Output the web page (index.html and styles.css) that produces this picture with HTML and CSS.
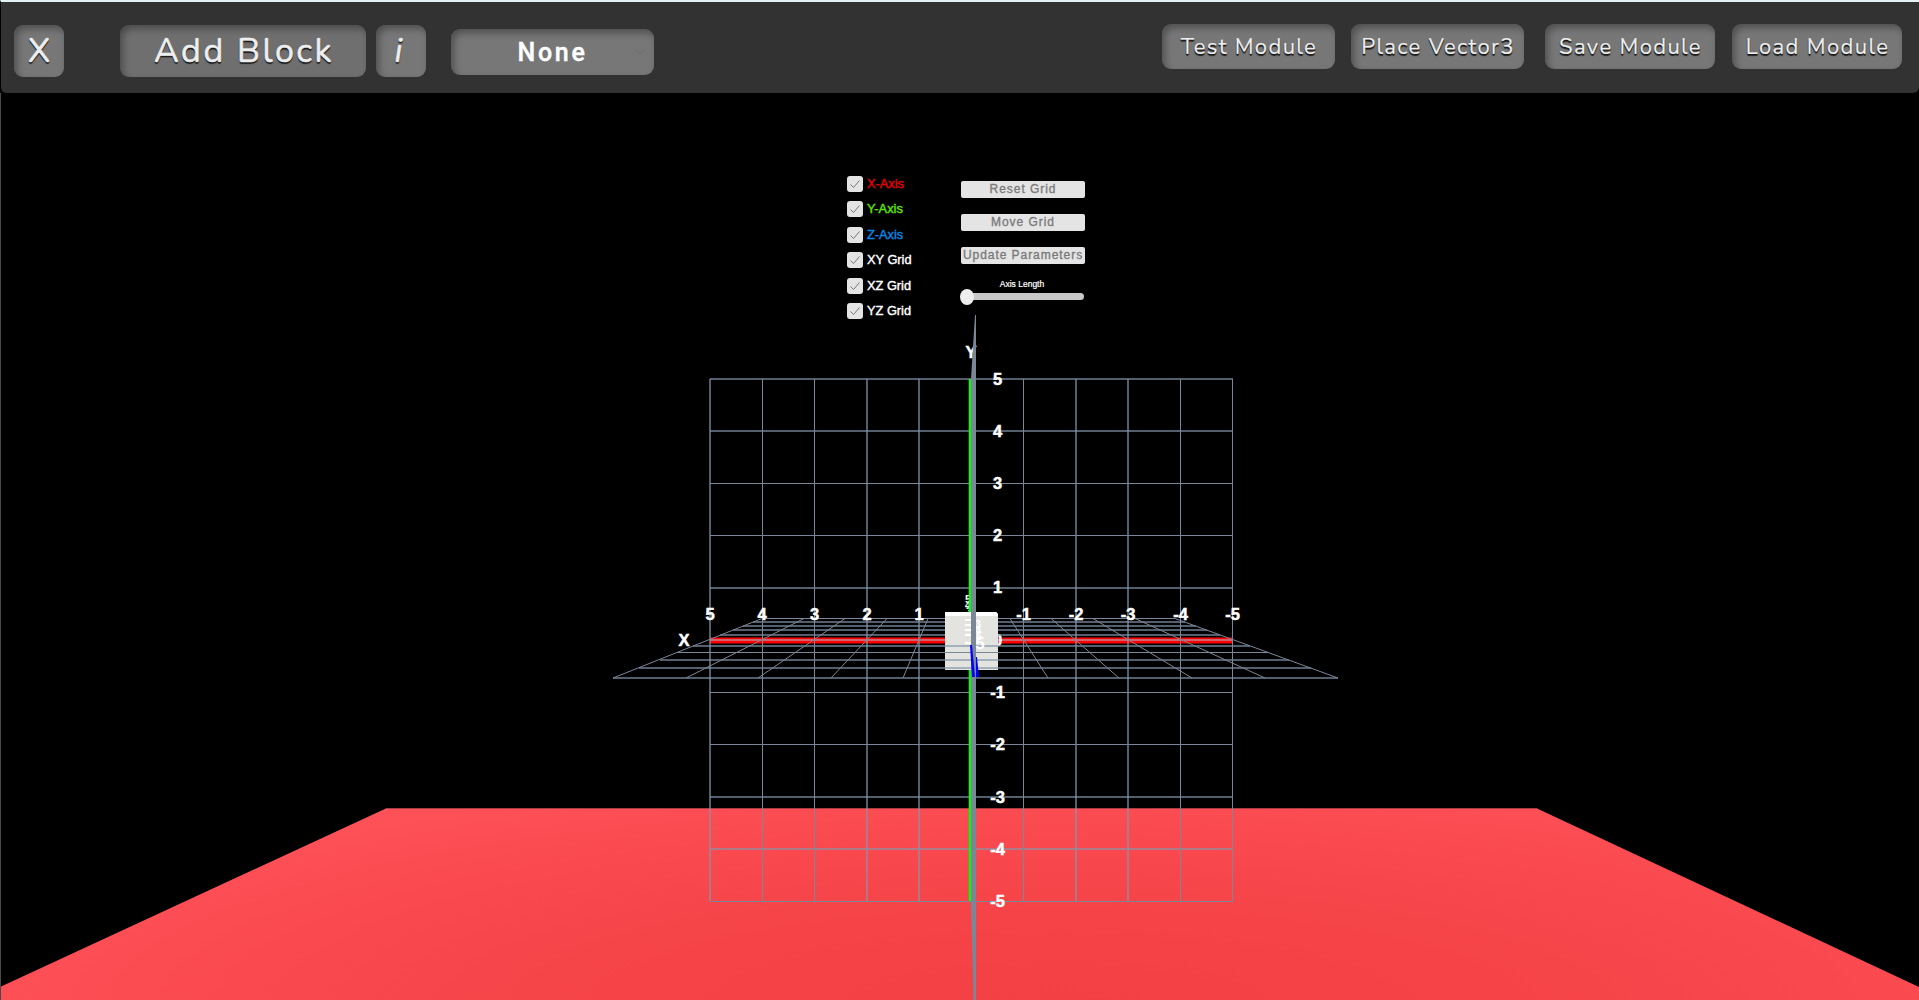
FILE: index.html
```html
<!DOCTYPE html>
<html lang="en">
<head>
<meta charset="utf-8">
<title>Module Builder</title>
<link rel="stylesheet" href="styles.css">
</head>
<body>
<header class="toolbar">
  <button class="btn large square">X</button>
  <button class="btn large add">Add Block</button>
  <button class="btn large square info">i</button>
  <button class="btn select"><span>None</span><svg class="chevron" viewBox="0 0 12 8"><path d="M1.5 1.5 6 5.5l4.5-4"/></svg></button>
  <nav class="actions">
    <button class="btn small wide">Test Module</button>
    <button class="btn small wide vector">Place Vector3</button>
    <button class="btn small save">Save Module</button>
    <button class="btn small">Load Module</button>
  </nav>
</header>
<main class="viewport">
  <svg class="scene" viewBox="0 93 1919 907" width="1919" height="907">
    <defs>
      <radialGradient id="floor" gradientUnits="userSpaceOnUse" cx="0" cy="0" r="1" gradientTransform="translate(1060 1010) scale(1250 270)">
        <stop offset="0" stop-color="#f34044"/><stop offset=".35" stop-color="#f54347"/><stop offset=".75" stop-color="#fb4c52"/><stop offset="1" stop-color="#ff545c"/>
      </radialGradient>
    </defs>
    <path d="M387 808H1536L1919 987V1000H0V987Z" fill="url(#floor)"/>
    <path d="M387 808.500H1536" stroke="#a83c42"/>
    <path d="M.5 93V1000" stroke="#4a4a4a"/>
    <g class="labels"><text x="971" y="358">Y</text></g>
    <g class="depth"><text x="968" y="603">5</text><text x="968" y="609">4</text><text x="969" y="615">3</text></g>
    <path class="red" d="M710 640.500H945M998 640.500H1232"/>
    <path class="redmid" d="M710 640H945M998 640H1232"/>
    <g class="labels"><text x="997.500" y="646">0</text></g>
    <path d="M945 612H996L998 614V670H945Z" fill="#e3e3e0"/>
    <path d="M945 612H996L998 614V616H945Z" fill="#fff"/>
    <g class="thick">
      <path d="M710 379V901M867 379V901M919 379V901M1076 379V901M1128 379V901"/>
      <path d="M710 379H1233M710 431H1233M710 588H1233M710 797H1233M710 849H1233"/>
      <path d="M753 622H945M998 622H1185M743 626H945M998 626H1196M733 630H945M998 630H1207M720 635H945M998 635H1220M693 646H1250M660 660H1289M639 668H1311M613 678H1338"/>
    </g>
    <g class="thin">
      <path d="M762.500 379V901M814.500 379V901M1023.500 379V901M1180.500 379V901M1232.500 379V901"/>
      <path d="M710 483.500H1233M710 535.500H1233M710 692.500H1233M710 744.500H1233M710 901.500H1233M762 618.500H945M998 618.500H1175M677 652.500H1269"/>
      <path d="M762 618.500 613 678M804 618.500 686 678M845 618.500 758 678M887 618.500 831 678M928 618.500 903 678M1010 618.500 1048 678M1051 618.500 1119 678M1093 618.500 1192 678M1135 618.500 1265 678M1175 618.500 1338 678"/>
    </g>
    <g class="labels">
      <text x="684" y="646">X</text>
      <text x="710" y="620">5</text><text x="762" y="620">4</text><text x="814.500" y="620">3</text><text x="867" y="620">2</text><text x="919" y="620">1</text>
      <text x="1023.500" y="620">-1</text><text x="1076" y="620">-2</text><text x="1128" y="620">-3</text><text x="1180.500" y="620">-4</text><text x="1232.500" y="620">-5</text>
      <text x="997.500" y="385">5</text><text x="997.500" y="437">4</text><text x="997.500" y="489">3</text><text x="997.500" y="541">2</text><text x="997.500" y="593">1</text>
      <text x="997.500" y="698">-1</text><text x="997.500" y="750">-2</text><text x="997.500" y="803">-3</text><text x="997.500" y="855">-4</text><text x="997.500" y="907">-5</text>
    </g>
    <path d="M970 379V612M970 670V901" stroke="#0f0" stroke-width="2.500"/>
    <path class="ticks" d="M965 620h6M965 625h6M965 630h6M965 635h6M965 643h6"/>
    <g class="depth"><text x="978" y="628">3</text><text x="978" y="634">4</text><text x="979" y="640">5</text><text class="front" x="980" y="649">5</text></g>
    <path d="M975 315H976V1000H973.500L971 901V379Z" fill="#7a8797"/>
    <path d="M970 645H972L975 677H972ZM976 657H977L979 677H976Z" fill="#00f"/>
  </svg>

  <section class="panel">
    <div class="checks">
      <label class="check x"><svg viewBox="0 0 16 16"><path d="m3.500 8.500 3 3 6-7"/></svg>X-Axis</label>
      <label class="check y"><svg viewBox="0 0 16 16"><path d="m3.500 8.500 3 3 6-7"/></svg>Y-Axis</label>
      <label class="check z"><svg viewBox="0 0 16 16"><path d="m3.500 8.500 3 3 6-7"/></svg>Z-Axis</label>
      <label class="check"><svg viewBox="0 0 16 16"><path d="m3.500 8.500 3 3 6-7"/></svg>XY Grid</label>
      <label class="check"><svg viewBox="0 0 16 16"><path d="m3.500 8.500 3 3 6-7"/></svg>XZ Grid</label>
      <label class="check"><svg viewBox="0 0 16 16"><path d="m3.500 8.500 3 3 6-7"/></svg>YZ Grid</label>
    </div>
    <div class="controls">
      <button class="gridbtn">Reset Grid</button>
      <button class="gridbtn">Move Grid</button>
      <button class="gridbtn">Update Parameters</button>
      <div class="slider-label">Axis Length</div>
      <div class="slider"><div class="knob"></div></div>
    </div>
  </section>
</main>
</body>
</html>
```
FILE: styles.css
```css
* { box-sizing: border-box; }
body { margin: 0; width: 1919px; height: 1000px; overflow: hidden; background: #000; font-family: "Liberation Sans", Arial, sans-serif; }
button { border: 0; padding: 0; margin: 0; white-space: nowrap; }
.toolbar { height: 93px; display: flex; align-items: flex-start; padding: 0 17px 0 13px; border-top: 2px solid #e2f1f4; border-left: 1px solid #000; border-bottom-left-radius: 6px; border-bottom-right-radius: 6px; background: #323232; }
.btn { border-radius: 9px; background: #777; box-shadow: inset 3px 4px 7px rgba(0,0,0,.33); color: #eee; font-family: Nunito, "Noto Sans", sans-serif; text-shadow: 0 1px 1px #111, 0 2px 1px #222; }
.large { height: 52px; margin-top: 23px; font-size: 34px; line-height: 51px; -webkit-text-stroke: .6px #eee; }
.square { width: 50px; }
.add { width: 246px; margin-left: 56px; padding-left: 2px; background: #6f6f6f; letter-spacing: 2.500px; }
.info { margin-left: 10px; padding-right: 5px; font-style: italic; }
.select { width: 203px; height: 46px; margin: 27px 0 0 25px; position: relative; color: #fff; font: 500 25px/48px Roboto, sans-serif; letter-spacing: 2.700px; text-shadow: none; -webkit-text-stroke: .4px #fff; }
.chevron { position: absolute; right: 8px; top: 19px; width: 12px; height: 8px; fill: none; stroke: #686868; stroke-width: 1; }
.actions { margin-left: auto; margin-top: 22px; display: flex; }
.small { width: 170px; height: 45px; font-size: 22px; line-height: 45px; padding: 1px 0 0 1px; letter-spacing: 1.350px; margin-left: 17px; -webkit-text-stroke: .2px #eee; }
.wide { width: 173px; }
.vector { margin-left: 16px; }
.save { margin-left: 21px; }
.viewport { height: 907px; display: grid; }
.scene { grid-area: 1 / 1; display: block; }
.labels { fill: #fff; stroke: #fff; stroke-width: .5; font-size: 16.500px; font-weight: 700; text-anchor: middle; }
.depth { fill: #fff; font-size: 11px; font-weight: 700; text-anchor: middle; }
.front { font-size: 17px; }
.thick { fill: none; stroke: #8494aa; stroke-width: 2; stroke-opacity: .64; shape-rendering: crispEdges; }
.thin { fill: none; stroke: #7a8799; stroke-width: 1; }
.red { stroke: #f00; stroke-width: 6; }
.redmid { stroke: #ce6570; stroke-width: 2; }
.ticks { stroke: #fff; stroke-width: 2; }
.panel { grid-area: 1 / 1; z-index: 1; align-self: start; justify-self: start; display: flex; margin: 82.500px 0 0 847px; }
.checks { width: 114px; display: flex; flex-direction: column; gap: 9.500px; }
.check { display: flex; align-items: center; gap: 4px; height: 16px; color: #fff; font-size: 12.800px; line-height: 16px; -webkit-text-stroke: .4px; }
.check svg { width: 16px; height: 16px; border-radius: 3px; background: #e4e4e4; fill: none; stroke: #777; stroke-width: 1; }
.x { color: #e90000; }
.y { color: #5ce600; }
.z { color: #0787e6; }
.controls { width: 125px; padding-top: 5.500px; }
.gridbtn { display: block; width: 124px; height: 17px; margin-bottom: 16px; border-radius: 2px; background: #e4e4e4; color: #7b7b7b; font: 12px/17px "Liberation Sans", sans-serif; letter-spacing: .95px; -webkit-text-stroke: .35px; }
.slider-label { width: 122px; height: 10px; margin-top: -1px; text-align: center; color: #fff; font-size: 8.500px; line-height: 10px; -webkit-text-stroke: .2px; }
.slider { width: 122px; height: 7px; margin: 4px 0 0 1px; border-radius: 4px; background: #c8c8c8; display: flex; align-items: center; }
.knob { width: 14px; height: 16px; border-radius: 50%; margin-left: -2px; background: #eee; flex: none; }
```
